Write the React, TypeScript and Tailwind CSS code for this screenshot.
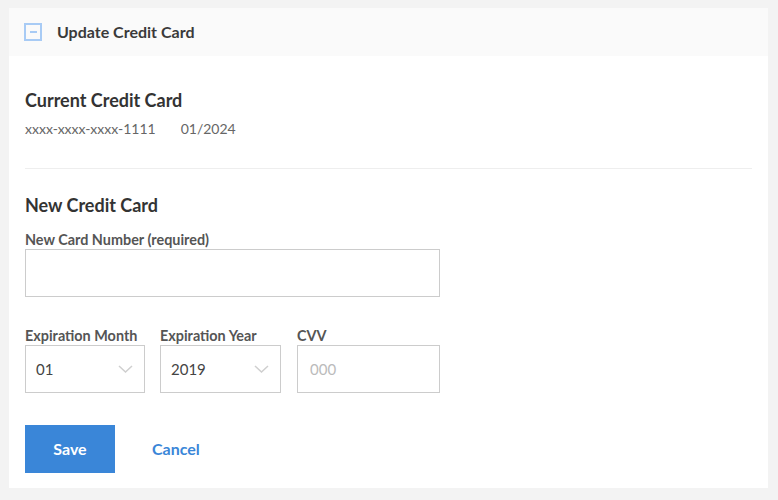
function Chevron() {
  return (
    <svg width="15" height="8" viewBox="0 0 15 8" fill="none" className="text-[#cfcfcf]">
      <path d="M1 1 L7.5 7 L14 1" stroke="currentColor" strokeWidth="1.5" />
    </svg>
  );
}

function SelectBox({ value, width }: { value: string; width: string }) {
  return (
    <div
      className={`flex h-12 items-center justify-between border border-[#cccccc] bg-white pl-[10px] pr-[11px] text-[15px] text-[#444] ${width}`}
    >
      <span>{value}</span>
      <Chevron />
    </div>
  );
}

export default function App() {
  return (
    <div className="h-[500px] w-[778px] bg-[#f3f3f3] px-[9px] pt-2 font-['Lato','Liberation_Sans',sans-serif]">
      <div className="h-[480px] w-[759px] bg-white">
        {/* header */}
        <div className="flex h-12 items-center gap-[15px] bg-[#fafafa] px-[15px]">
          <div className="flex h-[18px] w-[18px] items-center justify-center border-2 border-[#a8cbf5]">
            <div className="h-[2px] w-[7px] bg-[#a8cbf5]" />
          </div>
          <span className="text-[16px] font-bold text-[#3a3a3a]">Update Credit Card</span>
        </div>

        <div className="px-4">
          <div className="border-b border-[#eeeeee] pb-[31px] pt-[33px]">
            <h2 className="text-[18px] font-bold leading-[22px] text-[#333]">Current Credit Card</h2>
            <div className="mt-[9px] flex gap-[25px] text-[14px] leading-[17px] text-[#666]">
              <span>xxxx-xxxx-xxxx-1111</span>
              <span>01/2024</span>
            </div>
          </div>

          <div className="pt-[25px]">
            <h2 className="text-[18px] font-bold leading-[22px] text-[#333]">New Credit Card</h2>
            <label className="mt-[15px] block text-[14.4px] font-bold leading-[17px] text-[#555]">
              New Card Number (required)
            </label>
            <div className="mt-[1px] h-12 w-[415px] border border-[#cccccc] bg-white" />

            <div className="mt-[30px] flex gap-[15px]">
              <div>
                <div className="text-[14.4px] font-bold leading-[17px] text-[#555]">Expiration Month</div>
                <div className="mt-[1px]">
                  <SelectBox value="01" width="w-[120px]" />
                </div>
              </div>
              <div>
                <div className="text-[14.4px] font-bold leading-[17px] text-[#555]">Expiration Year</div>
                <div className="mt-[1px]">
                  <SelectBox value="2019" width="w-[121px]" />
                </div>
              </div>
              <div className="ml-[1px]">
                <div className="text-[14.4px] font-bold leading-[17px] text-[#555]">CVV</div>
                <div className="mt-[1px] flex h-12 w-[143px] items-center border border-[#cccccc] bg-white pl-[12px] text-[15px] text-[#bbbbbb]">
                  000
                </div>
              </div>
            </div>

            <div className="mt-8 flex items-center gap-[37px]">
              <button className="h-12 w-[90px] bg-[#3a86d8] text-[16px] font-bold text-white">Save</button>
              <button className="text-[16px] font-bold text-[#3a86d8]">Cancel</button>
            </div>
          </div>
        </div>
      </div>
    </div>
  );
}
